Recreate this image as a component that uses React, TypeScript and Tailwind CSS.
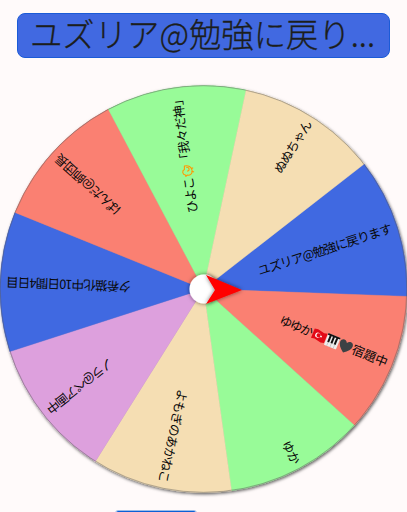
const slices = [
  { color: '#4169e1', text: 'ユズリア@勉強に戻ります', start: 57, end: 197.5 },
  { color: '#fa8072', text: '', start: 80, end: 197 },
  { color: '#98fb98', text: 'ゆか', start: 173, end: 197.5 },
  { color: '#f5deb3', text: 'よもぎのあかねこ', start: 103, end: 198 },
  { color: '#dda0dd', text: 'ノラ@ペア画中', start: 117, end: 198 },
  { color: '#4169e1', text: '夕希猫化中10日間4日目', start: 73, end: 198 },
  { color: '#fa8072', text: 'ぱんだ@師団長', start: 115, end: 198 },
  { color: '#98fb98', text: '', start: 78, end: 197 },
  { color: '#f5deb3', text: 'ぬぬちゃん', start: 138, end: 197.5 },
];

const R = 203.5;
const half = (20 * Math.PI) / 180;
const px = R * Math.cos(half);
const py = R * Math.sin(half);

function Label({ text, start, end }: { text: string; start: number; end: number }) {
  return (
    <text x={start} y={4.2} textLength={end - start} fontSize={12.6} fill="#080808">
      {text}
    </text>
  );
}

function Chick() {
  return (
    <g transform="translate(119 -0.5)" fill="none" stroke="#ff9800" strokeWidth={1.1} strokeLinecap="round" strokeLinejoin="round">
      <path d="M-5 -2 L-3.500 -2.200 C-3 -5 1 -5.500 2 -2.500 L5.500 -2 C6 2 3.500 5 0 5 C-3.500 5 -4.800 2 -3.800 -0.500 Z" />
      <path d="M0 0.500 C0.500 3 3.500 2.800 4 0 M-1 5 L-1.500 6.300 M2 4.700 L2.500 6" />
    </g>
  );
}

function Emojis() {
  return (
    <g>
      <path d="M117.500 -5 Q121 -6.300 124.500 -5 T131.500 -5 V5 Q128 6.300 124.500 5 T117.500 5 Z" fill="#e30a17" />
      <circle cx="122.800" cy="0" r="2.600" fill="#fff" />
      <circle cx="123.600" cy="-0.200" r="2.100" fill="#e30a17" />
      <circle cx="126.300" cy="0" r="0.900" fill="#fff" />
      <rect x="132" y="-6" width="13" height="12.500" rx="0.800" fill="#eee" />
      <path d="M132 -6 H145 V-4.300 H132 Z M134 -5 H136 V2.500 H134 Z M137.500 -5 H139.500 V2.500 H137.500 Z M141 -5 H143 V2.500 H141 Z" fill="#111" />
      <path d="M135 2.500 V6.500 M138.500 2.500 V6.500 M142 2.500 V6.500" stroke="#aaa" strokeWidth="0.500" />
      <path d="M152.700 6.500 C148.500 3.500 146 0.700 146 -2.500 C146 -6.700 151.200 -7.200 152.700 -3.700 C154.200 -7.200 159.400 -6.700 159.400 -2.500 C159.400 0.700 157 3.500 152.700 6.500 Z" fill="#3c4144" />
    </g>
  );
}

export default function App() {
  return (
    <main className="flex h-[512px] w-[407px] flex-col overflow-hidden bg-[#fffafa] font-['Noto_Sans_CJK_JP',sans-serif]">
      <header className="mx-[17px] mt-[13px] flex h-[45px] shrink-0 items-center rounded-lg border border-[#1b5bd7] bg-[#4169e1]">
        <svg className="h-full w-full overflow-visible" aria-label="ユズリア@勉強に戻り...">
          <text
            x="12"
            y="33"
            fontSize="33.500"
            fontWeight="300"
            textLength="345"
            lengthAdjust="spacingAndGlyphs"
            fill="#1c1e1c"
            stroke="#1c1e1c"
            strokeWidth="0.300"
          >
            ユズリア@勉強に戻り...
          </text>
        </svg>
      </header>
      <svg className="mt-[22px] h-[420px] w-[407px] shrink-0" viewBox="0 80 407 420">
        <defs>
          <filter id="wheelShadow" x="-10%" y="-10%" width="120%" height="120%">
            <feDropShadow dx="1" dy="1.500" stdDeviation="1.500" floodColor="#000" floodOpacity="0.600" />
          </filter>
          <filter id="pinShadow" x="-30%" y="-30%" width="160%" height="160%">
            <feDropShadow dx="0" dy="0" stdDeviation="2" floodColor="#000" floodOpacity="0.550" />
          </filter>
        </defs>
        <g filter="url(#wheelShadow)">
          <circle cx="203.500" cy="289" r="203.500" fill="#888" />
          {slices.map((s, i) => (
            <path
              key={i}
              d={`M0 0 L${px} ${-py} A${R} ${R} 0 0 1 ${px} ${py} Z`}
              transform={`translate(203.500 289) rotate(${-17.9 + i * 40})`}
              fill={s.color}
              stroke={s.color}
              strokeWidth="0.400"
            />
          ))}
          <circle cx="203.500" cy="289" r="203.300" fill="none" stroke="#555" strokeOpacity="0.500" strokeWidth="0.800" />
        </g>
        {slices.map((s, i) => (
          <g key={i} transform={`translate(204 289) rotate(${-17.9 + i * 40})`}>
            {i === 1 && (
              <>
                <Label text="ゆゆか" start={82} end={117} />
                <Emojis />
                <Label text="宿題中" start={160} end={197.5} />
              </>
            )}
            {i === 7 && (
              <>
                <Label text="ひよこ" start={77} end={113} />
                <Chick />
                <Label text="「我々だ神」" start={125} end={197.5} />
              </>
            )}
            {s.text && <Label text={s.text} start={s.start} end={s.end} />}
          </g>
        ))}
        <circle cx="204" cy="289" r="14.500" fill="#fff" filter="url(#pinShadow)" />
        <path d="M206 275 L242 290 L206 304 L215 290 Z" fill="#f00" filter="url(#pinShadow)" />
      </svg>
      <div className="ml-[115px] mt-[10px] h-8 w-[82px] shrink-0 rounded-[3px] border border-[#9dbdea] bg-[#0b60d6] bg-clip-padding" />
    </main>
  );
}
